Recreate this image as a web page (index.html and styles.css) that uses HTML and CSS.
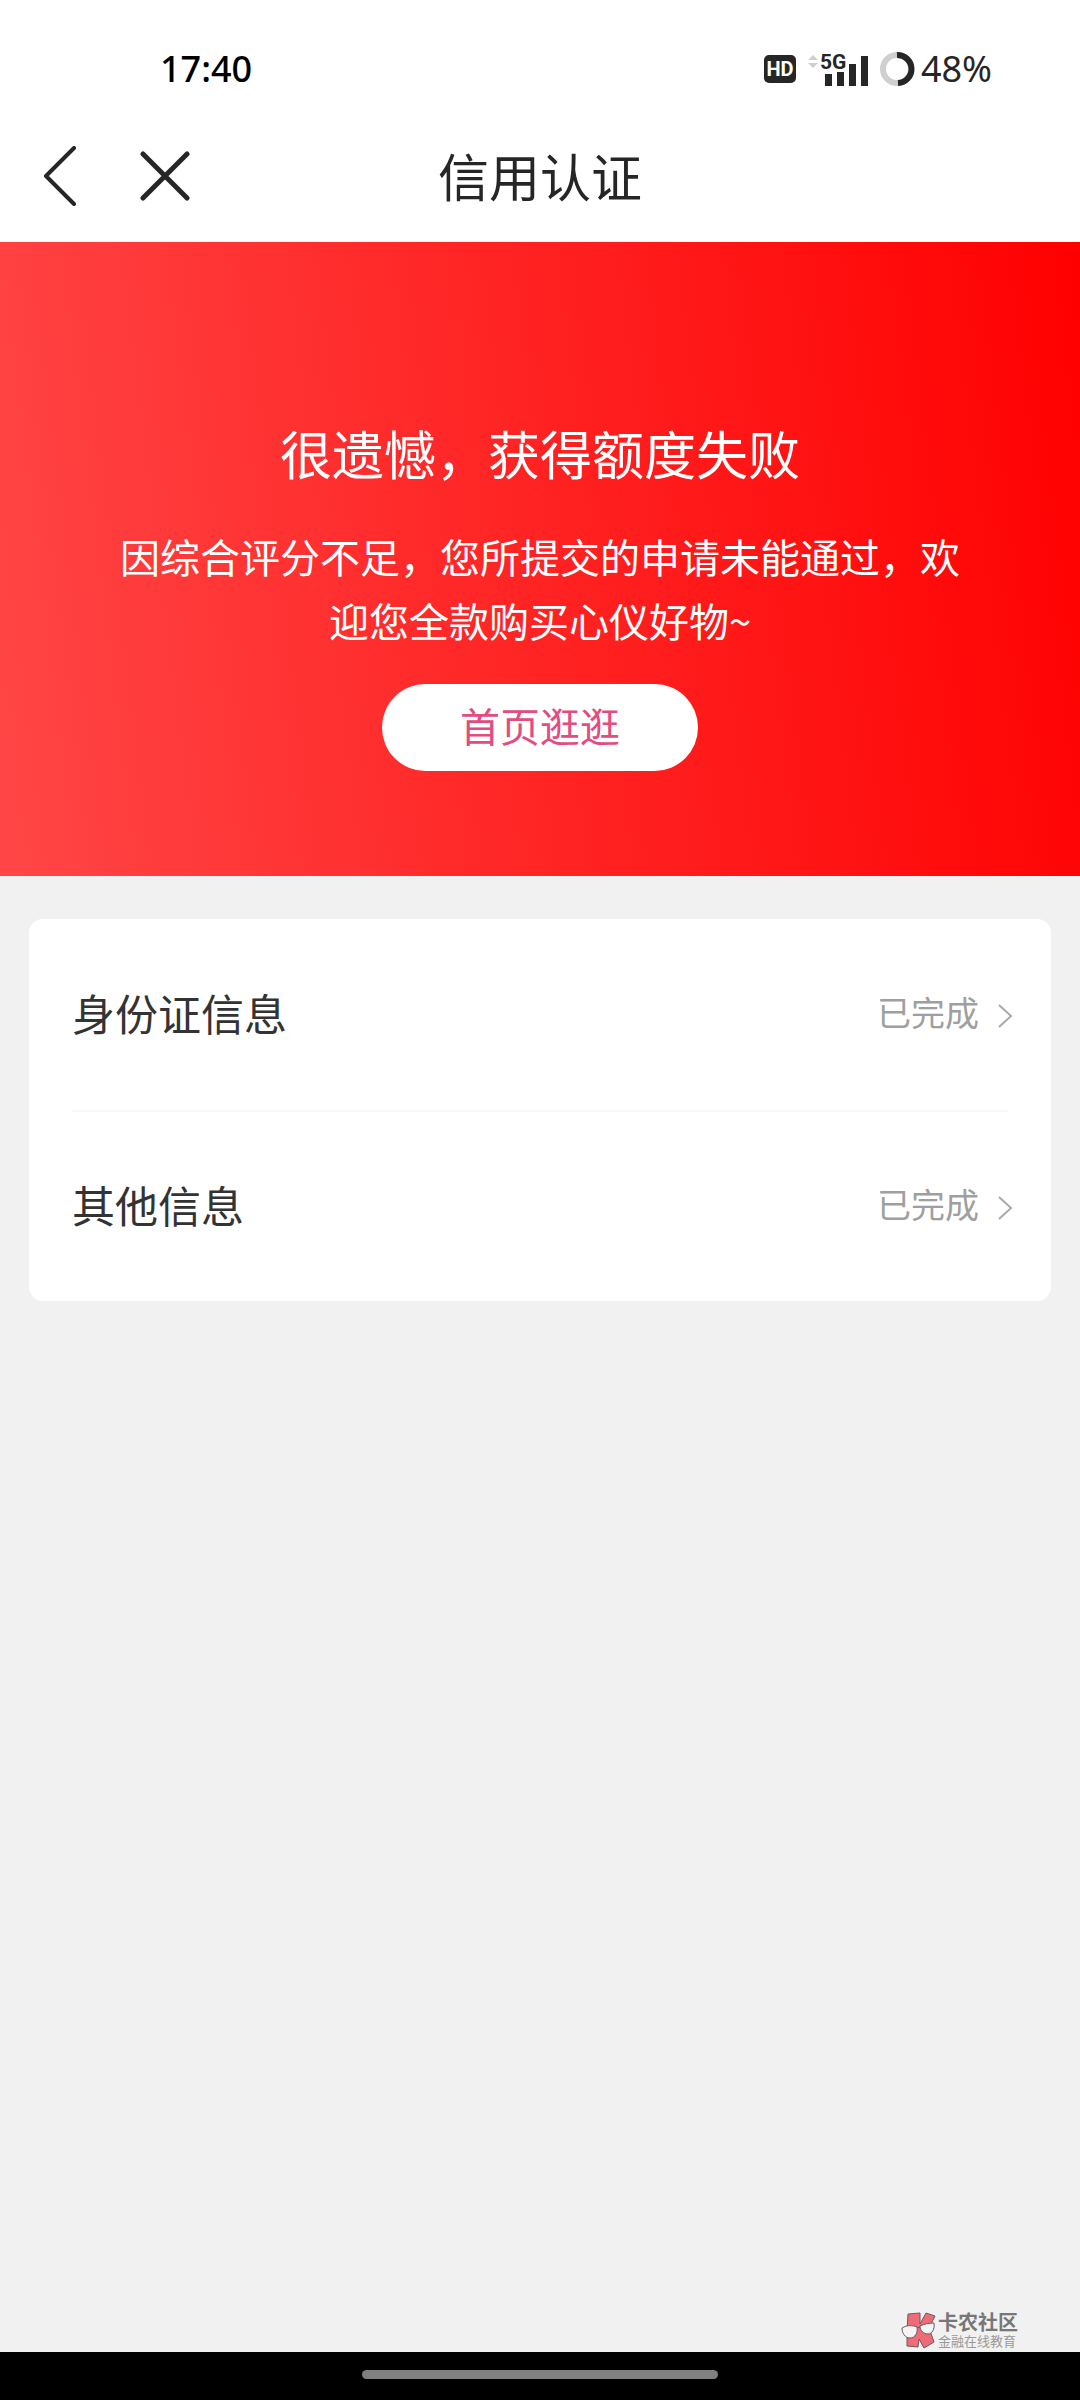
FILE: index.html
```html
<!DOCTYPE html>
<html lang="zh-CN">

<head>
    <meta charset="UTF-8">
    <meta name="viewport" content="width=device-width, initial-scale=1.0">
    <title>信用认证</title>
    <link rel="stylesheet" href="styles.css">
</head>

<body>
    <div class="status-bar">
        <span class="time">17:40</span>
        <div class="status-right">
            <svg class="hd" width="32" height="28" viewBox="0 0 32 28">
                <rect width="32" height="28" rx="5" fill="#262626" />
                <text x="16" y="21" text-anchor="middle">HD</text>
            </svg>
            <svg class="signal" width="62" height="38" viewBox="0 -4 62 38">
                <path d="M1 8l5-5 5 5zM1 11l5 5 5-5z" fill="#cfcfcf" />
                <text x="13" y="17">5G</text>
                <path d="M18 22h7v12h-7zM30 20h7v14h-7zM42 12h7v22h-7zM54 4h7v30h-7z" fill="#262626" />
            </svg>
            <svg width="36" height="36" viewBox="0 0 36 36" fill="none" stroke-width="6">
                <circle cx="18" cy="18" r="14" stroke="#cfcfcf" />
                <path d="M18 4a14 14 0 0 1 1 28" stroke="#262626" />
            </svg>
            <span class="battery">48%</span>
        </div>
    </div>

    <header class="nav-bar">
        <div class="nav-buttons">
            <button class="nav-btn" type="button" aria-label="返回">
                <svg width="36" height="60" viewBox="0 0 36 60">
                    <path d="M32 2L4 30l28 28" />
                </svg>
            </button>
            <button class="nav-btn close" type="button" aria-label="关闭">
                <svg width="50" height="50" viewBox="0 0 50 50">
                    <path d="M3 3l44 44M47 3L3 47" />
                </svg>
            </button>
        </div>
        <h1>信用认证</h1>
    </header>

    <section class="banner">
        <h2>很遗憾，获得额度失败</h2>
        <p>因综合评分不足，您所提交的申请未能通过，欢迎您全款购买心仪好物~</p>
        <button class="home-btn" type="button">首页逛逛</button>
    </section>

    <main>
        <div class="card">
            <a class="row" href="#">
                <span class="label">身份证信息</span>
                <span class="state">已完成</span>
                <svg class="arrow" width="16" height="26" viewBox="0 0 16 26">
                    <path d="M2 2l12 11L2 24" />
                </svg>
            </a>
            <a class="row" href="#">
                <span class="label">其他信息</span>
                <span class="state">已完成</span>
                <svg class="arrow" width="16" height="26" viewBox="0 0 16 26">
                    <path d="M2 2l12 11L2 24" />
                </svg>
            </a>
        </div>

        <div class="watermark">
            <svg width="36" height="38" viewBox="0 0 36 38" stroke="#6d5a5c" stroke-width="1">
                <path d="M7 3l12-1v11l6-11 9 3-6 12 5 14-10 6-5-9-1 8-11-1V19z" fill="#ee6b77" />
                <path d="M1 17c5-3 10-3 15-1 1 6-2 11-7 11s-8-5-8-10zM19 15c4-2 9-3 14-3 1 6-2 11-6 11s-8-3-8-8zM16 17l3-1" fill="#f4f4f4" />
            </svg>
            <div>
                <div class="wm-name">卡农社区</div>
                <div class="wm-sub">金融在线教育</div>
            </div>
        </div>
    </main>

    <div class="home-bar"><span></span></div>
</body>

</html>
```
FILE: styles.css
```css
* {
    box-sizing: border-box;
}

body {
    margin: 0;
    min-height: 100vh;
    display: flex;
    flex-direction: column;
    background: #f1f1f1;
    color: #262626;
    font-family: "Noto Sans CJK SC", sans-serif;
    font-weight: 400;
}

h1,
h2,
p {
    margin: 0;
    font-weight: inherit;
}

button {
    border: none;
    padding: 0;
    font: inherit;
    cursor: pointer;
}

svg {
    display: block;
}

/* Status bar */
.status-bar {
    display: flex;
    justify-content: space-between;
    align-items: center;
    height: 110px;
    padding: 28px 88px 0 160px;
    background: #fff;
    font: 500 36px/52px "Noto Sans", sans-serif;
}

.time {
    color: #000;
}

.status-right {
    display: flex;
    align-items: center;
}

.hd text {
    font: 700 20px "Roboto", sans-serif;
    fill: #fff;
}

.signal {
    margin: 0 10px 4px 11px;
    overflow: visible;
}

.signal text {
    font: 700 21px "Roboto", sans-serif;
    fill: #262626;
}

.battery {
    margin-left: 6px;
    font-weight: 400;
}

/* Title bar */
.nav-bar {
    display: grid;
    grid-template-columns: 1fr auto 1fr;
    align-items: center;
    height: 132px;
    padding: 0 42px;
    background: #fff;
}

.nav-bar h1 {
    padding-bottom: 2px;
    font-size: 51px;
    line-height: 76px;
}

.nav-buttons {
    display: flex;
    align-items: center;
    gap: 62px;
}

.nav-btn {
    background: none;
}

.nav-btn path {
    fill: none;
    stroke: #262626;
    stroke-width: 4;
    stroke-linecap: round;
    stroke-linejoin: round;
}

.close path {
    stroke-width: 5;
}

/* Result */
.banner {
    display: flex;
    flex-direction: column;
    align-items: center;
    padding: 173px 108px 105px;
    background: linear-gradient(83deg, #ff4646, #f00);
    color: #fff;
    text-align: center;
}

.banner h2 {
    font-size: 52px;
    line-height: 76px;
}

.banner p {
    margin-top: 33px;
    font-size: 40px;
    line-height: 64px;
}

.home-btn {
    width: 316px;
    height: 87px;
    margin-top: 32px;
    padding-bottom: 6px;
    border-radius: 44px;
    background: #fff;
    color: #e34c80;
    font-size: 40px;
    line-height: 60px;
}

/* Info list */
main {
    flex: 1;
    display: flex;
    flex-direction: column;
    justify-content: space-between;
    padding: 43px 29px 3px;
}

.card {
    padding: 0 43px;
    border-radius: 14px;
    background: #fff;
}

.row {
    display: flex;
    align-items: center;
    height: 191px;
    color: #333;
    text-decoration: none;
}

.row + .row {
    border-top: 2px solid #f7f7f7;
}

.label {
    flex: 1;
    padding-bottom: 6px;
    font-size: 43px;
    line-height: 64px;
}

.state {
    padding-bottom: 5px;
    color: #9f9f9f;
    font-size: 34px;
    line-height: 50px;
}

/* the arrow hangs past the end of the divider */
.arrow {
    margin: 2px -5px 0 18px;
    fill: none;
    stroke: #aaa;
    stroke-width: 2;
}

.watermark {
    display: flex;
    align-items: center;
    align-self: flex-end;
    gap: 1px;
    margin-right: 33px;
    color: #777;
}

.wm-name {
    font-size: 20px;
    font-weight: 700;
    line-height: 22px;
}

.wm-sub {
    color: #999;
    font-size: 13px;
    line-height: 16px;
}

/* Gesture bar */
.home-bar {
    display: flex;
    justify-content: center;
    align-items: center;
    height: 48px;
    padding-bottom: 3px;
    background: #000;
}

.home-bar span {
    width: 33%;
    height: 9px;
    border-radius: 5px;
    background: #808080;
}
```
